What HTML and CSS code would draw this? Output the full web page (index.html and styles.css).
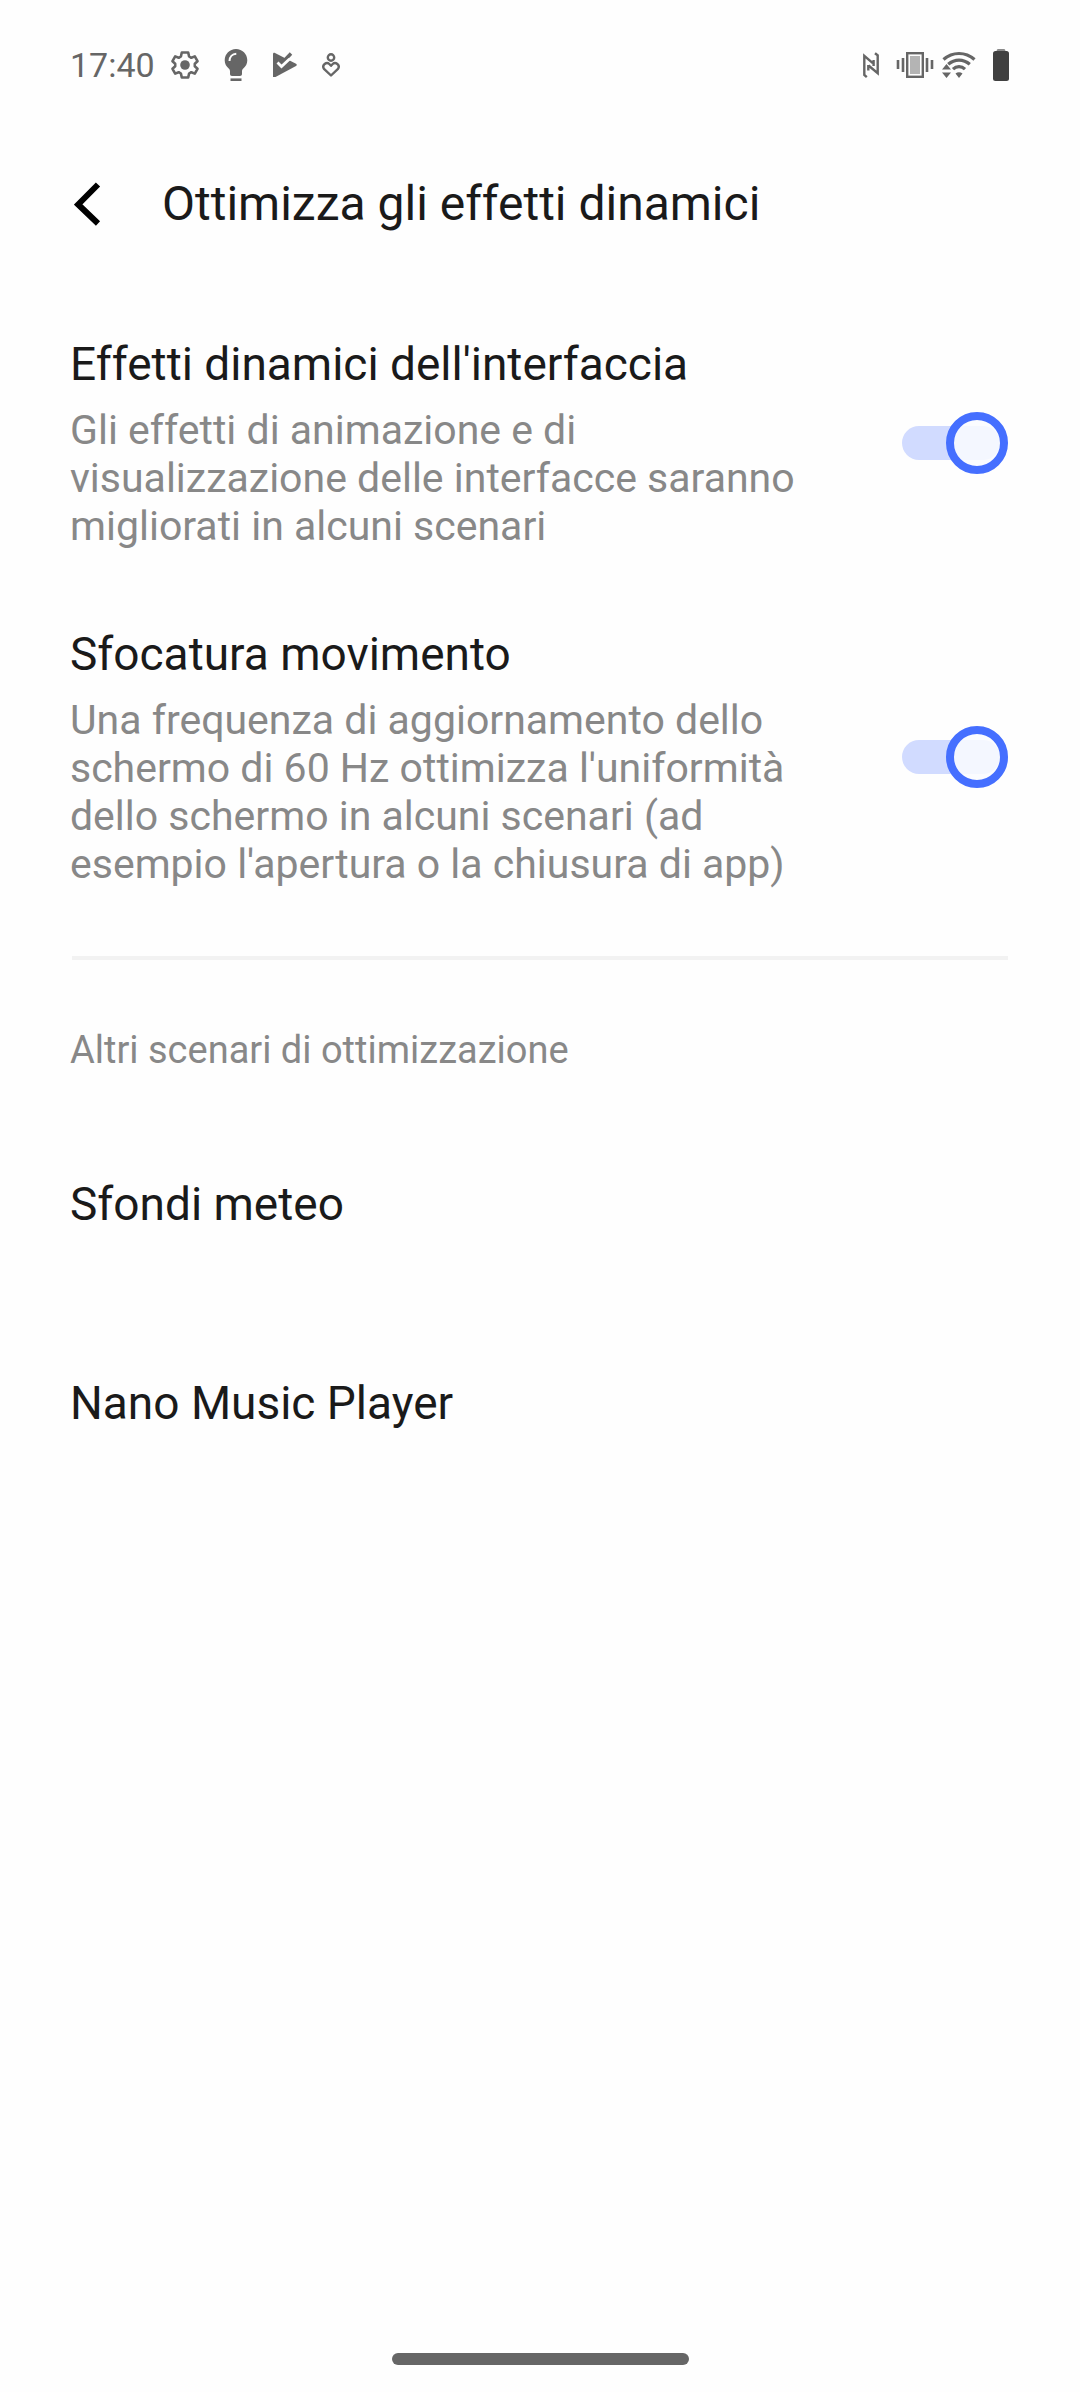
FILE: index.html
```html
<!DOCTYPE html>
<html lang="it">
<head>
<meta charset="utf-8">
<meta name="viewport" content="width=device-width, initial-scale=1">
<title>Ottimizza gli effetti dinamici</title>
<link rel="stylesheet" href="styles.css">
</head>
<body>
<div class="screen">
  <div class="status">
    <div class="status-left">
      <span class="clock">17:40</span>
      <div class="notifications">
        <svg width="28" height="30" viewBox="0 0 28 30" aria-hidden="true">
          <path d="M10.8 2.500h6.400l.9 4 2.200 1.300 3.500-1.400 2.700 4.800-2.700 2.500v2.600l2.700 2.500-2.700 4.800-3.500-1.400-2.200 1.300-.9 4h-6.400l-.9-4-2.200-1.300-3.500 1.400-2.700-4.800 2.700-2.500v-2.600l-2.700-2.500 2.700-4.800 3.500 1.400 2.200-1.300z" fill="none" stroke="#666" stroke-width="2.600" stroke-linejoin="round"/>
          <circle cx="14" cy="15" r="4.800" fill="#666"/>
        </svg>
        <svg width="24" height="34" viewBox="0 0 24 34" aria-hidden="true">
          <path d="M12 1C5.700 1 .7 6 .7 12.200c0 3.600 1.600 6.200 4 8.300.8.800 1.300 1.600 1.300 2.700V26c0 1.200.8 2 2 2h8c1.200 0 2-.8 2-2v-2.800c0-1.100.5-1.900 1.300-2.700 2.400-2.100 4-4.700 4-8.300C23.300 6 18.300 1 12 1z" fill="#666"/>
          <path d="M5.500 13c0-4 2.800-7 6.800-7.300" fill="none" stroke="#fefefe" stroke-width="2"/>
          <path d="M6.500 31.700h11" stroke="#666" stroke-width="2.600"/>
        </svg>
        <svg width="24" height="26" viewBox="0 0 24 26" aria-hidden="true">
          <path d="M0 2.200C0 1 1 .5 2 1l21 10.700c1 .6 1 1.600 0 2.200L2.500 25H0z" fill="#666"/>
          <path d="M9 11l9-9.500" stroke="#666" stroke-width="3.400"/>
          <path d="M4.500 10.500l4 4 8-7.500" fill="none" stroke="#fefefe" stroke-width="2.800"/>
        </svg>
        <svg width="18" height="24" viewBox="0 0 18 24" aria-hidden="true">
          <g fill="none" stroke="#666" stroke-width="2.400" stroke-linejoin="round">
            <circle cx="9" cy="4.500" r="3.200"/>
            <path d="M9 22.500L2 15.800C-.5 12 4.500 8.300 7.300 11L9 12.800l1.700-1.800C13.500 8.300 18.500 12 16 15.800z"/>
          </g>
        </svg>
      </div>
    </div>
    <div class="status-right">
      <svg width="18" height="28" viewBox="0 0 18 28" aria-hidden="true">
        <path d="M4.800 26.200L2.300 24V4.800l8.500 7.400M13 2.200L15.700 4.400v17.800L6.500 14.500M6.300 14v5.500M11.600 15V9" fill="none" stroke="#666" stroke-width="2.400"/>
      </svg>
      <svg width="38" height="26" viewBox="0 0 38 26" aria-hidden="true">
        <path d="M2 8v9M7 6v14M31 6v14M36 8v9" stroke="#666" stroke-width="2.600"/>
        <rect x="11.200" y="1.200" width="15.600" height="23.600" fill="#fefefe" stroke="#666" stroke-width="2.400"/>
        <rect x="14" y="4" width="10" height="18" fill="#b4b4b4"/>
      </svg>
      <svg class="wifi" width="34" height="28" viewBox="0 0 34 28" aria-hidden="true">
        <g fill="none" stroke="#666" stroke-width="3.200">
          <path d="M1.500 8.500c9-8 22-8 31 0M6.200 13.300c6.500-5.600 15.100-5.600 21.600 0M11 18.200c3.500-3.400 8.500-3.400 12 0"/>
        </g>
        <path d="M0 18.500L4.500 13 9 18.500zM0 21.500h9L4.500 27zM13.500 22.500c2-1.800 5-1.800 7 0L17 27z" fill="#666"/>
      </svg>
      <svg width="18" height="34" viewBox="0 0 18 34" aria-hidden="true">
        <path d="M6 1h6c1 0 1.500 1 1.500 3h-9C4.500 2 5 1 6 1z" fill="#8a8a8a"/>
        <rect x="1" y="3" width="16" height="30" rx="2.500" fill="#404040"/>
      </svg>
    </div>
  </div>

  <header class="topbar">
    <button class="back" type="button" aria-label="Indietro">
      <svg width="28" height="44" viewBox="0 0 28 44" aria-hidden="true">
        <path d="M24 2.500L4.200 22.500 24 41.500" fill="none" stroke="#000" stroke-width="6"/>
      </svg>
    </button>
    <h1 class="heading">Ottimizza gli effetti dinamici</h1>
  </header>

  <main class="content">
    <div class="row">
      <label class="row-text" for="effects">
        <span class="row-title">Effetti dinamici dell'interfaccia</span>
        <span class="row-desc">Gli effetti di animazione e di visualizzazione delle interfacce saranno migliorati in alcuni scenari</span>
      </label>
      <input class="switch" id="effects" type="checkbox" role="switch" checked>
    </div>
    <div class="row">
      <label class="row-text" for="blur">
        <span class="row-title">Sfocatura movimento</span>
        <span class="row-desc">Una frequenza di aggiornamento dello schermo di 60 Hz ottimizza l'uniformità dello schermo in alcuni scenari (ad esempio l'apertura o la chiusura di app)</span>
      </label>
      <input class="switch" id="blur" type="checkbox" role="switch" checked>
    </div>
    <hr class="divider">
    <h2 class="section">Altri scenari di ottimizzazione</h2>
    <a class="link-row" href="#meteo">Sfondi meteo</a>
    <a class="link-row" href="#player">Nano Music Player</a>
  </main>

  <div class="navbar"><div class="handle"></div></div>
</div>
</body>
</html>
```
FILE: styles.css
```css
*,
*::before,
*::after {
  box-sizing: border-box;
}

body {
  margin: 0;
  background: #fefefe;
  color: #1a1a1a;
  font-family: Roboto, "Liberation Sans", sans-serif;
}

.screen {
  display: flex;
  flex-direction: column;
  min-height: 100vh;
}

.status {
  display: flex;
  justify-content: space-between;
  align-items: center;
  height: 130px;
  padding: 0 70px;
}

.status svg {
  display: block;
}

.status-left,
.status-right,
.notifications {
  display: flex;
  align-items: center;
}

.status-left,
.status-right {
  gap: 16px;
}

.notifications {
  gap: 25px;
}

.clock {
  font-size: 34px;
  line-height: 40px;
  color: #666;
}

.wifi {
  margin-left: -8px;
}

.topbar {
  display: flex;
  align-items: center;
  gap: 60px;
  height: 148px;
  padding: 0 74px;
}

.back {
  display: flex;
  padding: 0;
  border: 0;
  background: none;
}

.heading {
  margin: 0;
  font-size: 48px;
  font-weight: 400;
  line-height: 56px;
}

.content {
  flex: 1;
  padding: 20px 70px 0;
}

.row {
  display: flex;
  align-items: center;
  justify-content: space-between;
  gap: 96px;
  padding: 38px 2px 38px 0;
}

.row-text {
  flex: 1;
  display: flex;
  flex-direction: column;
  gap: 14px;
}

.row-title {
  font-size: 46px;
  line-height: 56px;
}

.row-desc {
  font-size: 41px;
  line-height: 48px;
  color: #888;
}

.switch {
  appearance: none;
  position: relative;
  flex: none;
  display: flex;
  align-items: center;
  width: 106px;
  height: 62px;
  margin: 0;
}

.switch::before {
  content: "";
  width: 98px;
  height: 34px;
  border-radius: 17px;
  background: #d1dbff;
}

.switch::after {
  content: "";
  position: absolute;
  top: 0;
  right: 0;
  width: 62px;
  height: 62px;
  border: 8px solid #456fff;
  border-radius: 50%;
  background: rgba(250, 252, 255, 0.85);
}

.divider {
  height: 4px;
  margin: 30px 2px 0;
  border: 0;
  background: #f2f2f2;
}

.section {
  margin: 67px 0 31px;
  font-size: 38px;
  font-weight: 400;
  line-height: 46px;
  color: #888;
}

.link-row {
  display: flex;
  align-items: center;
  min-height: 199px;
  color: inherit;
  font-size: 46px;
  line-height: 56px;
  text-decoration: none;
}

.navbar {
  display: flex;
  justify-content: center;
  padding: 27px 0;
}

.handle {
  width: 297px;
  height: 12px;
  border-radius: 6px;
  background: #666;
}
```
